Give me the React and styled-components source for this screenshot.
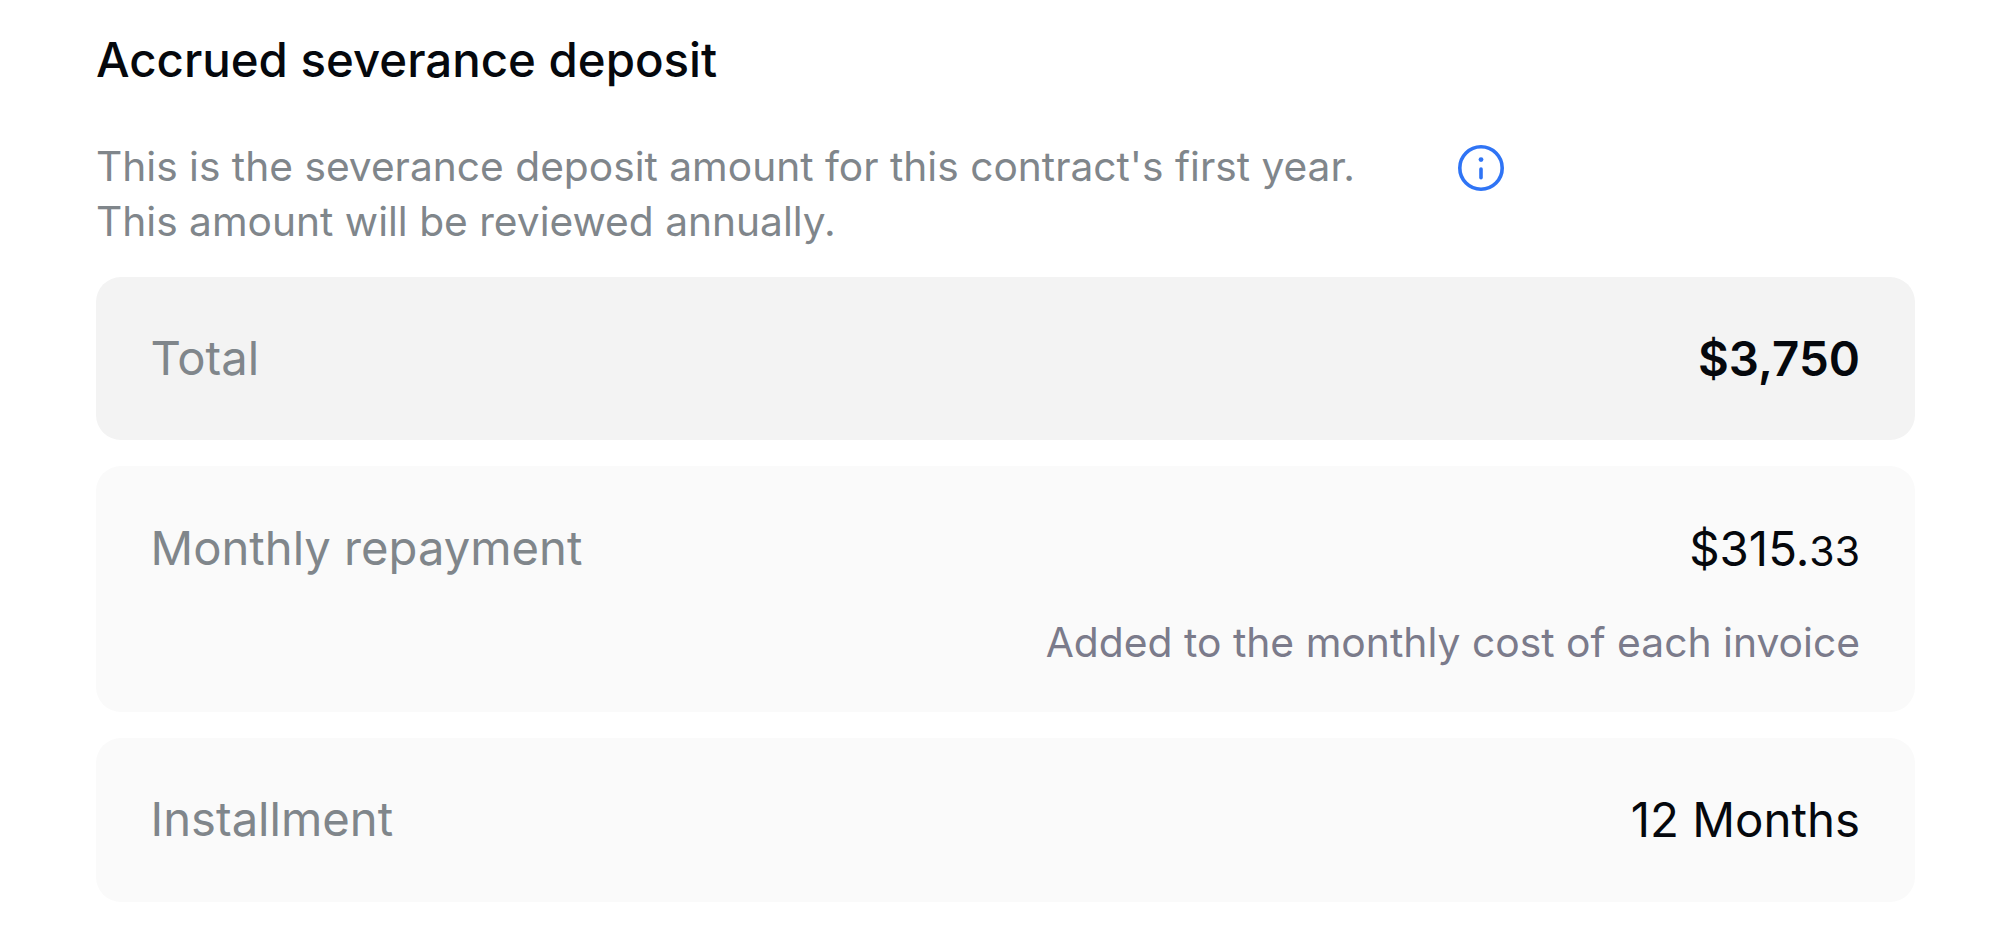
import React from "react";
import styled, { createGlobalStyle } from "styled-components";

const Global = createGlobalStyle`
  html, body { margin: 0; padding: 0; background: #fff; }
  body { font-family: Inter, "Noto Sans", sans-serif; }
`;

const Page = styled.main`
  box-sizing: border-box;
  width: 2000px;
  height: 931px;
  padding: 32px 85px 0 96px;
  overflow: hidden;
`;

const Title = styled.h2`
  margin: 0;
  font-size: 47.4px;
  line-height: 56px;
  font-weight: 500;
  color: #05080d;
`;

const Intro = styled.div`
  display: flex;
  align-items: flex-start;
  gap: 102px;
  margin-top: 51px;
  margin-bottom: 28px;
`;

const Description = styled.p`
  margin: 0;
  font-size: 40.7px;
  line-height: 55px;
  font-weight: 400;
  color: #80868b;
`;

const InfoIcon = styled.svg`
  width: 48px;
  height: 48px;
  flex: none;
  margin-top: 4.5px;
`;

const Stack = styled.div`
  display: flex;
  flex-direction: column;
  gap: 26px;
`;

const Card = styled.section`
  box-sizing: border-box;
  height: ${(p) => p.$height}px;
  padding: ${(p) => p.$top || 0}px 55px 0 54.5px;
  border-radius: 25px;
  background: ${(p) => (p.$strong ? "#f3f3f3" : "#fafafa")};
`;

const Row = styled.div`
  display: flex;
  justify-content: space-between;
  align-items: center;
  height: ${(p) => p.$height}px;
`;

const Label = styled.span`
  font-size: 47.2px;
  font-weight: 400;
  color: #80868b;
  margin-bottom: 2px;
`;

const Value = styled.span`
  font-size: 47.4px;
  font-weight: ${(p) => (p.$bold ? 600 : 400)};
  color: #05080d;
`;

const Cents = styled.span`
  font-size: 41px;
`;

const Note = styled.div`
  text-align: right;
  font-size: 40.8px;
  line-height: 54px;
  margin-top: 12px;
  color: #7b7b8b;
`;

export default function App() {
  return (
    <Page>
      <Global />
      <Title>Accrued severance deposit</Title>
      <Intro>
        <Description>
          This is the severance deposit amount for this contract's first year.
          <br />
          This amount will be reviewed annually.
        </Description>
        <InfoIcon viewBox="0 0 24 24" fill="none" stroke="#2f74f5" strokeWidth="1.8" strokeLinecap="round">
          <circle cx="12" cy="12" r="10.6" />
          <line x1="12" y1="12.5" x2="12" y2="16.9" />
          <circle cx="12" cy="7.8" r="1.2" fill="#2f74f5" stroke="none" />
        </InfoIcon>
      </Intro>
      <Stack>
        <Card $strong $height={163}>
          <Row $height={162}>
            <Label>Total</Label>
            <Value $bold>$3,750</Value>
          </Row>
        </Card>
        <Card $height={246} $top={27}>
          <Row $height={110}>
            <Label>Monthly repayment</Label>
            <Value>
              $315.<Cents>33</Cents>
            </Value>
          </Row>
          <Note>Added to the monthly cost of each invoice</Note>
        </Card>
        <Card $height={164}>
          <Row $height={162}>
            <Label>Installment</Label>
            <Value>12 Months</Value>
          </Row>
        </Card>
      </Stack>
    </Page>
  );
}
